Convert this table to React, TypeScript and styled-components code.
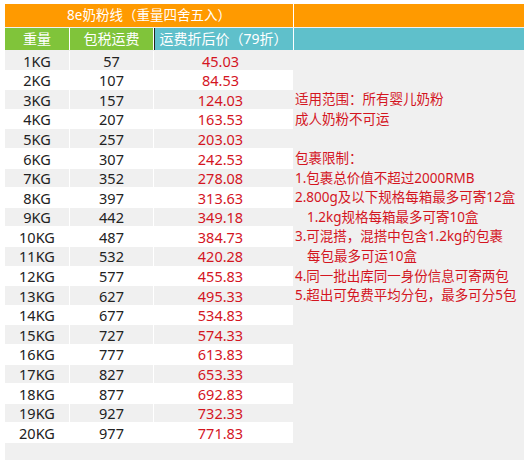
import React from "react";
import styled, { createGlobalStyle } from "styled-components";

const Global = createGlobalStyle`
  html, body { margin: 0; padding: 0; background: #ffffff; }
  body { font-family: "Noto Sans", "Noto Sans CJK SC", sans-serif; }
`;

const Sheet = styled.div`
  margin: 4px 0 0 5px;
  width: 519px;
  height: 456px;
  background: #f0f0f0;
  display: flex;
  flex-direction: column;
  gap: 1px;
  font-size: 13.5px;
`;

const BandRow = styled.div`
  display: grid;
  grid-template-columns: 64px 83px 139px 230px;
  column-gap: 1px;
  background: #ffffff;
`;

const TitleCell = styled.div<{ $span?: number }>`
  grid-column: span ${(p) => p.$span ?? 1};
  height: 23px;
  background: #ff9a00;
  color: #ffffff;
  display: flex;
  align-items: center;
  justify-content: center;
  line-height: 1;
  padding-top: 1px;
  box-sizing: border-box;
`;

const HeadCell = styled.div<{ $tone: "green" | "teal"; $edge?: boolean }>`
  height: 22px;
  background: ${(p) => (p.$tone === "green" ? "#80c43a" : "#5fc0cb")};
  color: #ffffff;
  display: flex;
  align-items: center;
  justify-content: center;
  line-height: 1;
  font-size: 14px;
  box-shadow: ${(p) => (p.$edge ? "inset 1px 0 0 #222" : "none")};
`;

const Body = styled.div`
  display: flex;
  gap: 1px;
  flex: 1;
`;

const Table = styled.div`
  display: grid;
  grid-template-columns: 64px 83px 139px;
  grid-auto-rows: 18.6px;
  column-gap: 1px;
  row-gap: 1px;
  background: #ffffff;
  align-self: flex-start;
  padding-bottom: 1px;
`;

const Cell = styled.div<{ $alt: boolean; $price?: boolean }>`
  background: ${(p) => (p.$alt ? "#f0f0f0" : "#ffffff")};
  color: ${(p) => (p.$price ? "#d4151f" : "#222222")};
  display: flex;
  align-items: center;
  justify-content: center;
  line-height: 1;
  font-size: 14.5px;
  padding-top: 1px;
  padding-right: ${(p) => (p.$price ? "6px" : "0")};
`;

const Notes = styled.div`
  flex: 1;
  padding-top: 39.2px;
  padding-left: 1px;
  display: flex;
  flex-direction: column;
`;

const NoteLine = styled.div<{ $indent?: boolean }>`
  height: 19.6px;
  line-height: 19.6px;
  color: #d4151f;
  white-space: nowrap;
  padding-left: ${(p) => (p.$indent ? "12px" : "0")};
`;

const rows: [string, string, string][] = [
  ["1KG", "57", "45.03"],
  ["2KG", "107", "84.53"],
  ["3KG", "157", "124.03"],
  ["4KG", "207", "163.53"],
  ["5KG", "257", "203.03"],
  ["6KG", "307", "242.53"],
  ["7KG", "352", "278.08"],
  ["8KG", "397", "313.63"],
  ["9KG", "442", "349.18"],
  ["10KG", "487", "384.73"],
  ["11KG", "532", "420.28"],
  ["12KG", "577", "455.83"],
  ["13KG", "627", "495.33"],
  ["14KG", "677", "534.83"],
  ["15KG", "727", "574.33"],
  ["16KG", "777", "613.83"],
  ["17KG", "827", "653.33"],
  ["18KG", "877", "692.83"],
  ["19KG", "927", "732.33"],
  ["20KG", "977", "771.83"],
];

const notes: { text: string; indent?: boolean }[] = [
  { text: "适用范围：所有婴儿奶粉" },
  { text: "成人奶粉不可运" },
  { text: "" },
  { text: "包裹限制：" },
  { text: "1.包裹总价值不超过2000RMB" },
  { text: "2.800g及以下规格每箱最多可寄12盒" },
  { text: "1.2kg规格每箱最多可寄10盒", indent: true },
  { text: "3.可混搭，混搭中包含1.2kg的包裹" },
  { text: "每包最多可运10盒", indent: true },
  { text: "4.同一批出库同一身份信息可寄两包" },
  { text: "5.超出可免费平均分包，最多可分5包" },
];

export default function App() {
  return (
    <>
      <Global />
      <Sheet>
        <BandRow>
          <TitleCell $span={3}>8e奶粉线（重量四舍五入）</TitleCell>
          <TitleCell />
        </BandRow>
        <BandRow>
          <HeadCell $tone="green">重量</HeadCell>
          <HeadCell $tone="green">包税运费</HeadCell>
          <HeadCell $tone="teal" $edge>运费折后价（79折）</HeadCell>
          <HeadCell $tone="teal" />
        </BandRow>
        <Body>
          <Table>
            {rows.map(([w, fee, price], i) => (
              <React.Fragment key={w}>
                <Cell $alt={i % 2 === 0}>{w}</Cell>
                <Cell $alt={i % 2 === 0}>{fee}</Cell>
                <Cell $alt={i % 2 === 0} $price>{price}</Cell>
              </React.Fragment>
            ))}
          </Table>
          <Notes>
            {notes.map((n, i) => (
              <NoteLine key={i} $indent={n.indent}>
                {n.text}
              </NoteLine>
            ))}
          </Notes>
        </Body>
      </Sheet>
    </>
  );
}
